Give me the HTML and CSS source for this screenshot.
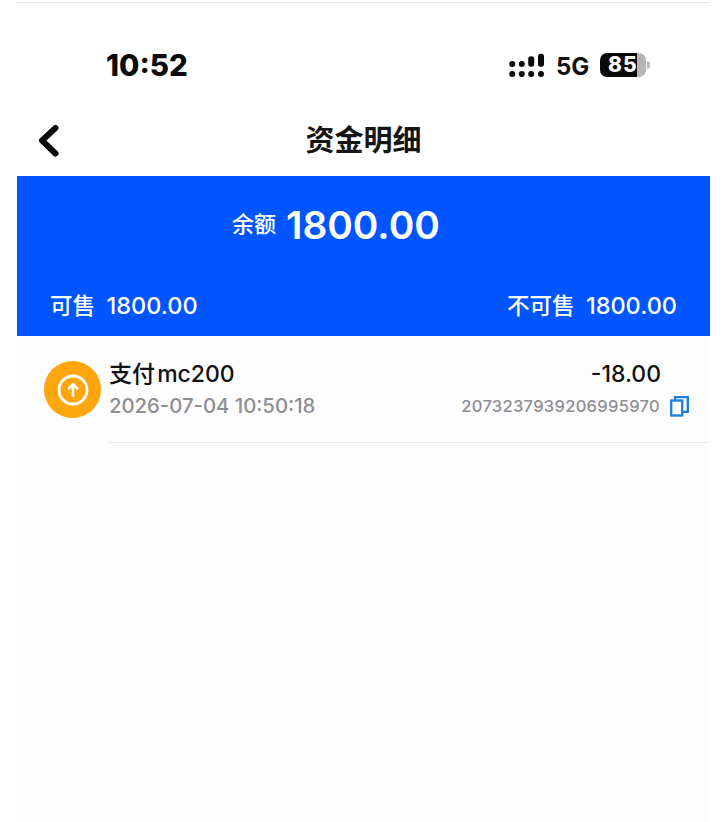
FILE: index.html
```html
<!DOCTYPE html>
<html lang="zh-CN">
<head>
  <meta charset="UTF-8">
  <meta name="viewport" content="width=device-width, initial-scale=1.0">
  <title>资金明细</title>
  <link rel="stylesheet" href="styles.css">
</head>
<body>
  <div class="phone">
    <!-- 状态栏 -->
    <div class="status-bar">
      <span class="clock">10:52</span>
      <div class="status-icons">
        <svg class="signal" width="37" height="27" viewBox="0 0 37 27" fill="#0a0a0a">
          <circle cx="3.2" cy="11" r="3"/><circle cx="3.2" cy="21" r="3"/>
          <circle cx="12.8" cy="11" r="3"/><circle cx="12.8" cy="21" r="3"/>
          <rect x="19.2" y="3.3" width="6" height="10.5" rx="2.8"/><circle cx="22.2" cy="21" r="3"/>
          <rect x="29" y="0.7" width="6" height="13" rx="2.8"/><circle cx="32" cy="21" r="3"/>
        </svg>
        <span class="network">5G</span>
        <div class="battery">
          <div class="battery-body"><span class="battery-level">85</span></div>
          <span class="battery-cap"></span>
        </div>
      </div>
    </div>

    <!-- 标题栏 -->
    <div class="nav-bar">
      <svg class="back" width="24" height="34" viewBox="0 0 24 34" fill="none" stroke="#0a0a0a" stroke-width="6" stroke-linecap="round" stroke-linejoin="round">
        <path d="M18.5 4 L5 16.5 L18.5 29.5"/>
      </svg>
      <h1 class="nav-title">资金明细</h1>
    </div>

    <!-- 余额 -->
    <div class="balance-card">
      <div class="balance-main">
        <span class="balance-label">余额</span>
        <span class="balance-value">1800.00</span>
      </div>
      <div class="balance-row">
        <span class="balance-sub"><span class="sub-label">可售</span>1800.00</span>
        <span class="balance-sub"><span class="sub-label">不可售</span>1800.00</span>
      </div>
    </div>

    <!-- 明细列表 -->
    <div class="record-list">
      <div class="record">
        <div class="record-icon">
          <svg width="34" height="34" viewBox="0 0 34 34" fill="none" stroke="#fff" stroke-linecap="round" stroke-linejoin="round">
            <circle cx="17" cy="17" r="14" stroke-width="2.8"/>
            <path d="M17 23 V11.5 M12.8 15.5 L17 11.2 L21.2 15.5" stroke-width="2.6"/>
          </svg>
        </div>
        <div class="record-body">
          <div class="record-line">
            <span class="record-name">支付 mc200</span>
            <span class="record-amount">-18.00</span>
          </div>
          <div class="record-line record-line-sub">
            <span class="record-time">2026-07-04 10:50:18</span>
            <span class="record-no">2073237939206995970
              <svg class="copy" width="19" height="21" viewBox="0 0 19 21" fill="none" stroke="#1b7fe0" stroke-width="2.3">
                <rect x="1.2" y="4.5" width="11" height="15"/>
                <path d="M5 4 V1.2 H17.8 V15.8 H12.5"/>
              </svg>
            </span>
          </div>
        </div>
      </div>
    </div>
  </div>
</body>
</html>
```

FILE: styles.css
```css
html, body { margin: 0; padding: 0; background: #fff; }
body { font-family: "Inter", "Noto Sans CJK SC", sans-serif; color: #111; }

.phone { width: 693px; height: 819px; margin-left: 17px; border-top: 1px solid #e6e6e6; margin-top: 2px; display: flex; flex-direction: column; }

.status-bar { height: 103px; display: flex; justify-content: space-between; align-items: flex-start; padding-top: 44px; box-sizing: border-box; }
.clock { margin-left: 89px; font-size: 29.5px; line-height: 36px; font-weight: 800; color: #0a0a0a; }
.status-icons { display: flex; align-items: center; height: 38px; margin-right: 60px; }
.signal { margin-right: 10px; }
.network { width: 33px; font-size: 24px; font-weight: 700; color: #111; margin-right: 11px; }
.battery { display: flex; align-items: center; margin-bottom: 2px; }
.battery-body { width: 46px; height: 24px; border-radius: 7px; background: linear-gradient(90deg, #0a0a0a 81%, #b5b5b5 81%); display: flex; align-items: center; padding-left: 8px; box-sizing: border-box; }
.battery-level { color: #fff; font-size: 21px; font-weight: 800; letter-spacing: 1px; line-height: 24px; }
.battery-cap { width: 3px; height: 8px; margin-left: 1px; background: #bbb; border-radius: 0 3px 3px 0; }

.nav-bar { height: 70px; position: relative; display: flex; align-items: center; justify-content: center; }
.back { position: absolute; left: 20px; top: 18px; }
.nav-title { margin: 0 0 6px; font-size: 29px; font-weight: 600; color: #151515; }

.balance-card { background: #0055ff; color: #fff; height: 160px; box-sizing: border-box; padding: 0 33px; display: flex; flex-direction: column; }
.balance-main { display: flex; align-items: center; margin-top: 26px; padding-left: 182px; }
.balance-label { font-size: 22px; margin-right: 10px; margin-bottom: 6px; font-weight: 500; }
.balance-value { font-size: 38.8px; font-weight: 600; line-height: 46px; }
.balance-row { display: flex; justify-content: space-between; margin-top: 42px; font-size: 23.5px; font-weight: 500; line-height: 32px; }
.sub-label { margin-right: 11.5px; font-size: 22.5px; }

.record-list { flex: 1; background: #fdfdfe; }
.record { display: flex; align-items: flex-start; padding: 25px 0 0 27px; }
.record-icon { width: 57px; height: 57px; border-radius: 50%; background: #ffa60d; display: flex; align-items: center; justify-content: center; flex-shrink: 0; margin-right: 8px; }
.record-body { flex: 1; height: 85px; border-bottom: 1px solid #e9e9ec; margin-top: -4px; }
.record-line { display: flex; justify-content: space-between; align-items: flex-start; height: 35px; line-height: 35px; padding-right: 49px; }
.record-line-sub { height: 28px; line-height: 28px; align-items: center; padding-right: 21px; }
.record-name { font-size: 23px; font-weight: 500; color: #111; word-spacing: -4px; }
.record-amount { font-size: 23px; font-weight: 500; color: #111; }
.record-time { font-size: 20.3px; font-weight: 500; color: #8e8e93; }
.record-no { display: flex; align-items: center; gap: 10px; font-size: 16.5px; font-weight: 500; color: #8e8e93; letter-spacing: 0.3px; }
```
